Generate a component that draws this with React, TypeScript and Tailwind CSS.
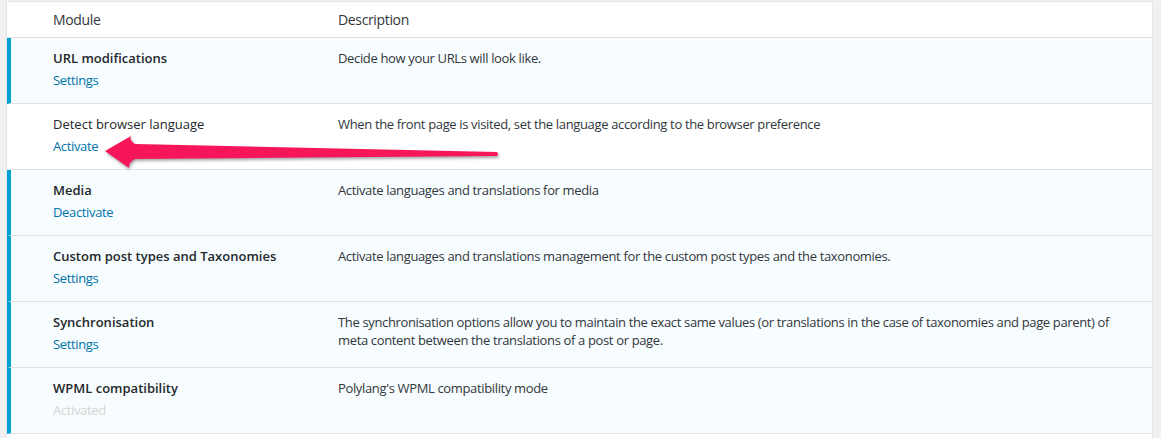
import React from "react";

type Row = { title: string; action: string; kind: "link" | "muted"; desc: string[]; active: boolean };

const rows: Row[] = [
  { title: "URL modifications", action: "Settings", kind: "link", desc: ["Decide how your URLs will look like."], active: true },
  { title: "Detect browser language", action: "Activate", kind: "link", desc: ["When the front page is visited, set the language according to the browser preference"], active: false },
  { title: "Media", action: "Deactivate", kind: "link", desc: ["Activate languages and translations for media"], active: true },
  { title: "Custom post types and Taxonomies", action: "Settings", kind: "link", desc: ["Activate languages and translations management for the custom post types and the taxonomies."], active: true },
  {
    title: "Synchronisation",
    action: "Settings",
    kind: "link",
    desc: [
      "The synchronisation options allow you to maintain the exact same values (or translations in the case of taxonomies and page parent) of",
      "meta content between the translations of a post or page.",
    ],
    active: true,
  },
  { title: "WPML compatibility", action: "Activated", kind: "muted", desc: ["Polylang's WPML compatibility mode"], active: true },
];

export default function App() {
  return (
    <div
      className="w-[1161px] h-[438px] overflow-hidden bg-[#f1f1f1] pt-[1px] pl-[6px]"
      style={{ fontFamily: '"Open Sans", "Noto Sans", sans-serif' }}
    >
      <div className="relative w-[1147px] border border-[#e5e5e5] bg-white text-[13px] tracking-[-0.35px]">
        <div className="flex h-[36px] items-center border-b border-[#e1e1e1] text-[14px] text-[#32373c]">
          <div className="w-[331px] pl-[46px]">Module</div>
          <div className="flex-1">Description</div>
        </div>
        {rows.map((r) => (
          <div
            key={r.title}
            className={
              "flex h-[66px] border-b border-[#e1e1e1] " +
              (r.active ? "bg-[#f7fcfe] border-l-4 border-l-[#00a0d2]" : "bg-white border-l-4 border-l-white")
            }
          >
            <div className="w-[327px] pl-[42px] pt-[10px]">
              <div
                className={
                  "leading-[20px] tracking-normal text-[#23282d] " + (r.active ? "font-semibold" : "font-normal")
                }
              >
                {r.title}
              </div>
              <div className={"mt-[2px] leading-[20px] " + (r.kind === "link" ? "text-[#0073aa]" : "text-[#d4d4d4]")}>
                {r.action}
              </div>
            </div>
            <div className="flex-1 pt-[11px] pr-[20px] text-[#32373c]">
              {r.desc.map((d) => (
                <div key={d} className="leading-[18px] whitespace-nowrap">
                  {d}
                </div>
              ))}
            </div>
          </div>
        ))}
        <div className="h-[10px]" />
        <svg
          className="absolute left-0 top-0 pointer-events-none"
          width="1147"
          height="437"
          viewBox="6 1 1147 437"
          style={{ filter: "drop-shadow(1px 2px 1.5px rgba(0,0,0,0.35))" }}
        >
          <path
            d="M104 150 L130 135 Q128 139 134 143 L496 151 Q498 153 496 155 L134 158 Q127 162 128 167 Z"
            fill="#f7165a"
          />
        </svg>
      </div>
    </div>
  );
}
